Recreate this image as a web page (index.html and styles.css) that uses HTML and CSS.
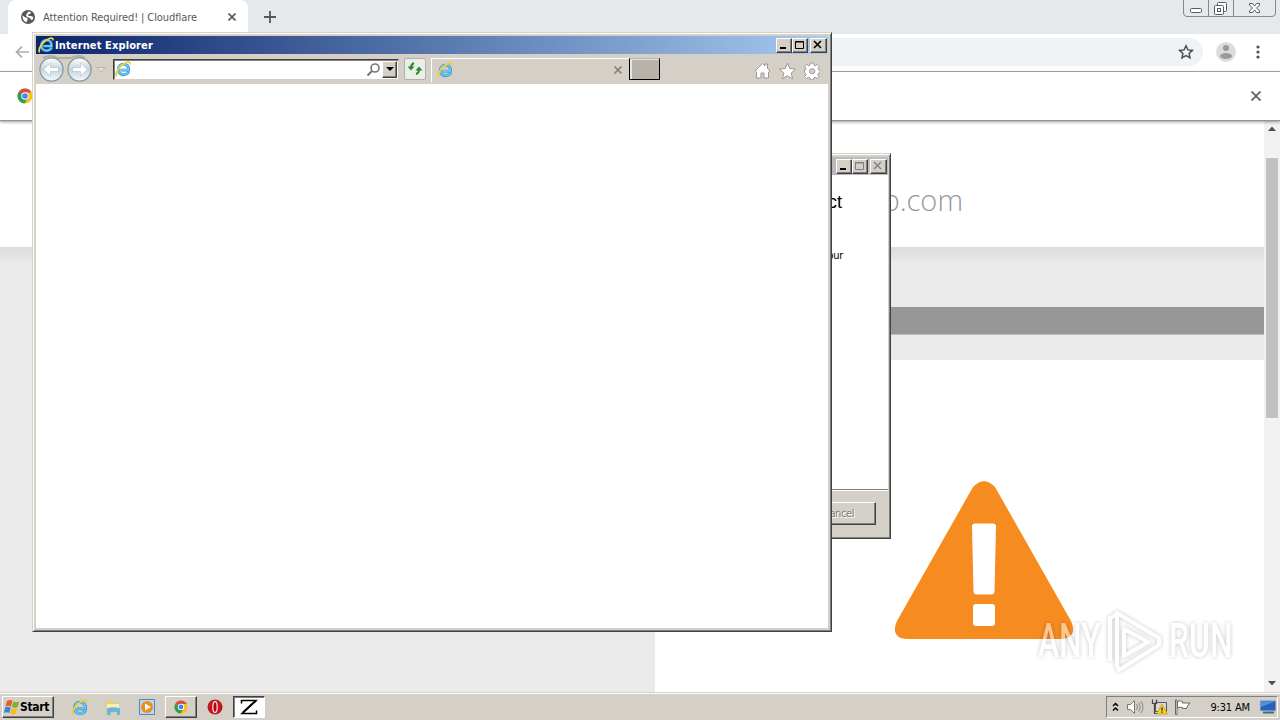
FILE: index.html
```
<!DOCTYPE html>
<html lang="en">
<head>
    <meta charset="UTF-8">
    <title>Desktop</title>
    <link rel="stylesheet" href="styles.css">
</head>
<body>
    <!-- shared icons -->
    <svg class="defs" width="0" height="0">
        <symbol id="ie" viewBox="0 0 16 16">
            <path d="M13.6 10.7c-.9 1.9-2.6 3-5 3-3.2 0-5.3-2.2-5.3-5.2 0-3.100 2.200-5.400 5.300-5.400 3.300 0 5.200 2.300 5 6H5.500" fill="none" stroke="#2f8fd0" stroke-width="2.900"/>
            <path d="M13.500 10.700c-.9 1.900-2.600 2.900-4.900 2.900-3.200 0-5.200-2.200-5.200-5.100 0-3.100 2.200-5.300 5.200-5.300 3.200 0 5.100 2.300 4.900 5.800H5.500" fill="none" stroke="#6cc6f2" stroke-width="1.800"/>
            <path d="M2 15C-.5 14 2.500 7.500 7.500 3.800 11 1.200 15.500-.5 14.800 3.300" fill="none" stroke="#f2cf3a" stroke-width="1.900"/>
        </symbol>
        <symbol id="chrome" viewBox="0 0 16 16">
            <circle cx="8" cy="8" r="7.500" fill="#fbc116"/>
            <path d="M8 8 1.500 4.250A7.500 7.500 0 0 1 14.600 4.500H8z" fill="#dd4b3e"/>
            <path d="M1.500 4.250A7.500 7.500 0 0 0 7.500 15.500L11 9.700 8 8z" fill="#279d58"/>
            <circle cx="8" cy="8" r="3.700" fill="#fff"/>
            <circle cx="8" cy="8" r="2.800" fill="#4285f4"/>
        </symbol>
    </svg>

    <div class="desktop">
        <main class="chrome">
            <div class="tab-strip">
                <div class="tab">
                    <svg width="14" height="14" viewBox="0 0 14 14"><circle cx="7" cy="7" r="7" fill="#55585c"/><path d="M1.500 5.500 4.500 7.500l2 .5v2l-1 2.300C3 11.500 1.200 9 1.500 5.500zM7.500 1.500l2.500.8L9 4 7 4.500 7.500 6h2.500l2.300 1-.5 2.500-1.800.5L9 8 6 7 5 5z" fill="#fff"/></svg>
                    <span class="tab-title">Attention Required! | Cloudflare</span>
                    <svg class="tab-close" width="8" height="8" viewBox="0 0 8 8"><path d="M.5.5l7 7M7.500.5l-7 7" stroke="#55585c" stroke-width="1.600"/></svg>
                </div>
                <svg class="new-tab" width="12" height="12" viewBox="0 0 12 12"><path d="M6 0v12M0 6h12" stroke="#55585c" stroke-width="1.800"/></svg>
                <svg class="win-controls" width="94" height="18" viewBox="0 0 94 18">
                    <path d="M.5 0v13q0 3.500 3.500 3.500h85q3.500 0 3.500-3.500V0M25.500 0v16M50.500 0v16" fill="none" stroke="#84898f"/>
                    <g fill="#fff" stroke="#555b66"><rect x="7.500" y="8.500" width="11" height="4" rx="1"/><rect x="34.500" y="2.500" width="9" height="9" rx="1"/><rect x="31.500" y="5.500" width="9" height="9" rx="1"/><rect x="34.500" y="8.500" width="3" height="3"/><path d="M66.500 3.500h3l2 2.500 2-2.500h3v1.500l-3 3 3 3v1.500h-3l-2-2.500-2 2.500h-3V11l3-3-3-3z"/></g>
                </svg>
            </div>
            <div class="toolbar">
                <svg width="14" height="12" viewBox="0 0 14 12"><path d="M14 6H1.500M7 .7 1.500 6 7 11.300" fill="none" stroke="#aaadb1" stroke-width="1.700"/></svg>
                <div class="omnibox">
                    <svg width="16" height="16" viewBox="0 0 16 16"><path d="M8 1.800l1.900 4.100 4.500.5-3.300 3 .9 4.400L8 11.600l-4 2.200.9-4.400-3.300-3 4.500-.5z" fill="none" stroke="#4c5056" stroke-width="1.500"/></svg>
                </div>
                <svg width="20" height="20" viewBox="0 0 20 20"><circle cx="10" cy="10" r="10" fill="#dcdcdc"/><circle cx="10" cy="6" r="3" fill="#999"/><ellipse cx="10" cy="14" rx="6" ry="3" fill="#999"/></svg>
                <svg class="more" width="4" height="14" viewBox="0 0 4 14"><g fill="#4c5056"><circle cx="2" cy="2" r="1.600"/><circle cx="2" cy="7" r="1.600"/><circle cx="2" cy="12" r="1.600"/></g></svg>
            </div>
            <div class="infobar">
                <svg width="16" height="16"><use href="#chrome"/></svg>
                <svg width="10" height="10" viewBox="0 0 10 10"><path d="M.5.5l9 9M9.500.5l-9 9" stroke="#5f6266" stroke-width="1.800"/></svg>
            </div>
            <div class="viewport">
                <div class="page">
                    <div class="site-head">b.com</div>
                    <div class="captcha"><div class="captcha-bar"></div></div>
                    <div class="columns">
                        <div class="col-left"></div>
                        <div class="col-right">
                            <svg width="178" height="158" viewBox="0 0 178 158">
                                <path d="M78 6Q89-5.500 100 6L176 140Q183 156 167 158H11Q-5 156 2 140z" fill="#f68b1f"/>
                                <path d="M80 42.500h18q3 0 3 3l-1.500 65q0 3-3 3h-15q-3 0-3-3L77 45.500q0-3 3-3z" fill="#fff"/>
                                <rect x="78" y="123" width="22" height="22" rx="3" fill="#fff"/>
                            </svg>
                        </div>
                    </div>
                </div>
                <div class="scrollbar">
                    <svg width="8" height="5" viewBox="0 0 8 5"><path d="M0 5 4 .5 8 5z" fill="#505050"/></svg>
                    <div class="thumb"></div>
                    <svg width="8" height="5" viewBox="0 0 8 5"><path d="M0 0 4 4.500 8 0z" fill="#505050"/></svg>
                </div>
            </div>
        </main>

        <section class="window dialog">
            <div class="title-bar inactive">
                <div class="buttons">
                    <b><svg width="12" height="10"><path d="M2 8h6" stroke="#000" stroke-width="2"/></svg></b>
                    <b><svg width="12" height="10"><path d="M1.500 1.500h8v7h-8zM1 2h9" fill="none" stroke="#808080"/></svg></b>
                    <b class="close"><svg width="12" height="10"><path d="M2 1l7 7M9 1 2 8" stroke="#808080" stroke-width="1.400"/></svg></b>
                </div>
            </div>
            <div class="dialog-body">
                <h1>product</h1>
                <p>your</p>
            </div>
            <div class="dialog-foot"><button>Cancel</button></div>
        </section>

        <section class="window explorer">
            <div class="title-bar">
                <svg width="16" height="16"><use href="#ie"/></svg>
                <span class="caption">Internet Explorer</span>
                <div class="buttons">
                    <b><svg width="12" height="10"><path d="M2 8h6" stroke="#000" stroke-width="2"/></svg></b>
                    <b><svg width="12" height="10"><path d="M1.500 1.500h8v7h-8zM1 2h9" fill="none" stroke="#000"/></svg></b>
                    <b class="close"><svg width="12" height="10"><path d="M2 1l7 7M9 1 2 8" stroke="#000" stroke-width="1.600"/></svg></b>
                </div>
            </div>
            <div class="ie-bar">
                <svg class="nav" width="70" height="28" viewBox="0 0 70 28">
                    <defs><linearGradient id="orb" x2="0" y2="1"><stop offset="0" stop-color="#fff"/><stop offset=".5" stop-color="#c3d3dd"/><stop offset="1" stop-color="#f2fcff"/></linearGradient></defs>
                    <path d="M7 3q8-4 14 0h14q8-4 14 0" fill="none" stroke="#b0ada7" stroke-width="2"/>
                    <g fill="url(#orb)" stroke="#87949c" stroke-width="1.200"><circle cx="15.500" cy="14.500" r="11.600"/><circle cx="43.500" cy="14.500" r="11.600"/></g>
                    <g fill="#fff" stroke="#b3c1ca" stroke-width=".7"><path d="M7.500 14.500l7-6.500v4.500h8v4h-8v4.500z"/><path d="M51.500 14.500l-7-6.500v4.500h-8v4h8v4.500z"/></g>
                    <path d="M61 12.500h8l-4 4.500z" fill="#e8e5df" stroke="#b5b1a9"/>
                </svg>
                <div class="address">
                    <svg width="16" height="16"><use href="#ie"/></svg>
                    <svg class="search" width="13" height="13" viewBox="0 0 13 13"><circle cx="8" cy="5" r="4" fill="none" stroke="#777" stroke-width="1.600"/><path d="M5 8l-4.500 4.500" stroke="#777" stroke-width="2"/></svg>
                    <span class="drop"><svg width="8" height="4"><path d="M0 0h8L4 4z"/></svg></span>
                </div>
                <div class="refresh"><svg width="16" height="16" viewBox="0 0 16 16"><path d="M.5 5.500h7L4 9.500zM8.500 9.500h7L12 5.500z" fill="#2f8a2d"/><path d="M4 6.500q0-3 3-4.500M12 8.500q0 3.500-3 4.500" fill="none" stroke="#2f8a2d" stroke-width="2"/></svg></div>
                <div class="ie-tab">
                    <svg width="16" height="16"><use href="#ie"/></svg>
                    <svg width="8" height="8" viewBox="0 0 8 8"><path d="M.5.5l7 7M7.500.5l-7 7" stroke="#87837d" stroke-width="1.600"/></svg>
                </div>
                <div class="ie-new"></div>
                <svg class="tools" width="66" height="18" viewBox="0 0 66 18">
                    <g fill="#fff" stroke="#9b9791" stroke-linejoin="round">
                        <path d="M1 9l7.500-7.500 2.500 2.500V2h2.500v4.500L16 9l-1.500 1v6H10v-5H7v5H2.500v-6z"/>
                        <path d="M33.500 1l2.300 5.500 5.900.5-4.500 4 1.400 5.800-5.100-3-5.100 3 1.400-5.800-4.500-4 5.900-.5z"/>
                        <path d="M56.600 1h3l.5 2.300 1.200.5 2-1.300 2 2-1.300 2 .5 1.200L66 8v2.800l-1.700.6-.5 1.200 1.300 2-2 2-2-1.300-1.200.5-.5 2h-3l-.5-2-1.200-.5-2 1.300-2-2 1.300-2-.5-1.200-1-.6V8l1-.3.5-1.200-1.300-2 2-2 2 1.300 1.200-.5z"/>
                        <circle cx="58.200" cy="9.300" r="2.600" fill="#d4d0c8"/>
                    </g>
                </svg>
            </div>
            <div class="ie-content"></div>
        </section>

        <footer class="taskbar">
            <div class="start">
                <svg width="16" height="16" viewBox="0 0 16 16"><path d="M3 2q3-2 5.500-.2L7 7.500Q4.500 6 1.500 7.300z" fill="#e65d25"/><path d="M9.300 2.500q3 1.500 6 0L13.700 8q-3 1.500-5.700 0z" fill="#78b52c"/><path d="M1.300 8.300Q4 7 6.700 8.500L5.300 14Q3 12.500 0 13.800z" fill="#3c82d6"/><path d="M7.700 9q3 1.500 5.700 0L12 14.700q-3 1.500-5.700-.2z" fill="#f5bd21"/></svg>
                <span>Start</span>
            </div>
            <div class="task"><svg width="17" height="17"><use href="#ie"/></svg></div>
            <div class="task"><svg width="16" height="16" viewBox="0 0 16 16"><path d="M1 2h5l1 1.500h7V14H1z" fill="#e8cf6c"/><path d="M2 5h12v4H2z" fill="#f9efae"/><path d="M2 9.500q6-2.500 13 0V16h-3v-3H5.500v3H2z" fill="#62b8e3"/></svg></div>
            <div class="task"><svg width="16" height="16" viewBox="0 0 16 16"><path d="M.5.5h15v15H.5z" fill="#b9daf5" stroke="#4589c9"/><circle cx="8" cy="8" r="6" fill="#f38a12"/><path d="M6 4.500 12 8l-6 3.500z" fill="#fff"/></svg></div>
            <div class="task raised"><svg width="14" height="14"><use href="#chrome"/></svg></div>
            <div class="task"><svg width="16" height="16" viewBox="0 0 16 16"><circle cx="8" cy="8" r="7.500" fill="#c4161c"/><ellipse cx="8" cy="8" rx="2.200" ry="5.500" fill="#a80d14" stroke="#f5dada" stroke-width="1.300"/></svg></div>
            <div class="task pressed"><svg width="18" height="16" viewBox="0 0 18 16"><path d="M1.500 4.500V1.500H16L2 14.500h14.500v-3" fill="none" stroke="#000" stroke-width="1.500"/><path d="M16 1.500 3 13.500" stroke="#000" stroke-width="2"/></svg></div>
            <div class="tray">
                <svg width="7" height="10" viewBox="0 0 7 10"><path d="M1 4l2.500-2.500L6 4M1 8.500 3.500 6 6 8.500" fill="none" stroke="#000" stroke-width="1.500"/></svg>
                <svg width="18" height="16" viewBox="0 0 18 16"><path d="M1.500 5.500h3l4-4v13l-4-4h-3z" fill="#fff" stroke="#777"/><path d="M10.500 5q2 3 0 6M12.800 3.500q3 4.500 0 9M15 2q4 6 0 12" fill="none" stroke="#888"/></svg>
                <svg width="17" height="16" viewBox="0 0 17 16"><path d="M4.500 3.500h11v9h-11z" fill="#d8d8d8" stroke="#555"/><path d="M1.500.5v4h4v-4M3.500 4v10.500H7" fill="none" stroke="#444" stroke-width="1.200"/><path d="M11 5l5.500 10h-11z" fill="#f8d31c" stroke="#b69200" stroke-width=".6"/><path d="M11 8.500v3M11 12.500v1.300" stroke="#222" stroke-width="1.300"/></svg>
                <svg width="17" height="16" viewBox="0 0 17 16"><path d="M.5 1v14.500H2V1zM2.500 2.500q3-1.500 5 0V4h7.500l-2.500 3-1 2.500h-4V8.500q-2.500-1-5 .5z" fill="#fff" stroke="#666"/></svg>
                <span class="clock">9:31 AM</span>
                <svg width="16" height="14" viewBox="0 0 16 14"><path d="M.5 1h15v9.500H.5z" fill="#2561ba" stroke="#7292bf"/><path d="M1 1.500h14L1 7z" fill="#4e91dc"/><path d="M3 12.500h11" stroke="#45628a" stroke-width="2"/></svg>
            </div>
        </footer>

        <div class="watermark">
            <span class="any">ANY</span>
            <svg width="60" height="64" viewBox="0 0 60 64"><g fill="none" stroke="#fff" stroke-width="4" stroke-linejoin="round"><path d="M12 58V4L54 29v7L14 61l-2-5M5 52V9l7-4M19 45V20l24 13-24 14z"/></g></svg>
            <span class="run">RUN</span>
        </div>
    </div>
</body>
</html>
```
FILE: styles.css
```
* {
    margin: 0;
    padding: 0;
    box-sizing: border-box;
}

body {
    font-family: 'DejaVu Sans Condensed', 'DejaVu Sans', sans-serif;
    font-size: 11px;
    overflow: hidden;
}

svg {
    display: block;
    flex: none;
}

.defs {
    position: absolute;
}

.desktop {
    position: relative;
    width: 1280px;
    height: 720px;
    display: flex;
    flex-direction: column;
    overflow: hidden;
}

/* Chrome */
.chrome {
    flex: 1;
    display: flex;
    flex-direction: column;
    background: #fff;
    min-height: 0;
}

.tab-strip {
    height: 34px;
    background: #e5e9ec;
    display: flex;
    align-items: flex-start;
    padding-left: 8px;
}

.tab {
    width: 240px;
    height: 34px;
    background: #fff;
    border-radius: 8px 8px 0 0;
    display: flex;
    align-items: center;
    padding: 0 12px 0 13px;
}

.tab-title {
    margin-left: 8px;
    color: #55585c;
    white-space: nowrap;
    letter-spacing: -0.09px;
}

.tab-close {
    margin-left: auto;
}

.new-tab {
    margin: 11px 0 0 16px;
}

.win-controls {
    margin: 0 3px 0 auto;
}

.toolbar {
    height: 38px;
    border-bottom: 1px solid #aaa;
    display: flex;
    align-items: center;
    padding: 0 20px 2px 15px;
}

.omnibox {
    flex: 1;
    height: 28px;
    margin: 0 13px 0 80px;
    padding-right: 9px;
    border-radius: 14px;
    background: #eff3f6;
    display: flex;
    align-items: center;
    justify-content: flex-end;
}

.more {
    margin-left: 20px;
}

.infobar {
    position: relative;
    height: 49px;
    border-bottom: 1px solid #939393;
    box-shadow: 0 1px 3px rgba(0, 0, 0, 0.4);
    display: flex;
    align-items: center;
    justify-content: space-between;
    padding: 0 19px 0 17px;
}

.viewport {
    flex: 1;
    display: flex;
    min-height: 0;
}

.page {
    flex: 1;
    display: flex;
    flex-direction: column;
}

.site-head {
    height: 126px;
    padding: 58px 301px 0 0;
    text-align: right;
    font: 300 29px/42px 'Open Sans', sans-serif;
    color: #999;
}

.captcha {
    height: 113px;
    padding: 60px 0 0 400px;
    background: linear-gradient(#dcdcdc, #e5e5e5 13px, #eaeaea 14px);
}

.captcha-bar {
    height: 28px;
    background: #979797;
    border-bottom: 1px solid #bbb;
}

.columns {
    flex: 1;
    display: grid;
    grid-template-columns: 655px 1fr;
}

.col-left {
    background: #eaeaea;
}

.col-right {
    padding: 121px 0 0 240px;
}

.scrollbar {
    width: 16px;
    background: #f1f1f1;
    display: flex;
    flex-direction: column;
    align-items: center;
    padding: 5px 0 6px;
}

.thumb {
    width: 12px;
    height: 260px;
    margin: 27px 0 auto;
    background: #c1c1c1;
}

/* Classic windows */
.window {
    position: absolute;
    background: #d4d0c8;
    border: 1px solid;
    border-color: #d4d0c8 #404040 #404040 #d4d0c8;
    box-shadow: inset 1px 1px #fff, inset -1px -1px #808080;
    padding: 3px;
    display: flex;
    flex-direction: column;
}

.explorer {
    left: 32px;
    top: 32px;
    width: 800px;
    height: 600px;
}

.title-bar {
    height: 18px;
    flex: none;
    display: flex;
    align-items: center;
    padding: 0 1px 0 2px;
    background: linear-gradient(90deg, #0a246a, #a6caf0);
}

.title-bar.inactive {
    background: linear-gradient(90deg, #808080, #c0c0c0);
}

.caption {
    margin-left: 1px;
    color: #fff;
    font-weight: bold;
    letter-spacing: 0.12px;
}

.buttons {
    margin-left: auto;
    display: flex;
}

.buttons b {
    width: 16px;
    height: 15px;
    background: #d4d0c8;
    border: 1px solid;
    border-color: #fff #404040 #404040 #fff;
    box-shadow: inset -1px -1px #808080;
    padding: 1px;
}

.buttons .close {
    width: 17px;
    margin-left: 2px;
}

.ie-bar {
    height: 30px;
    flex: none;
    display: flex;
    align-items: center;
}

.address {
    width: 286px;
    height: 21px;
    margin-left: 7px;
    background: #fff;
    border: 1px solid;
    border-color: #404040 #d4d0c8 #d4d0c8 #404040;
    box-shadow: inset 1px 1px #808080;
    display: flex;
    align-items: center;
    padding: 1px;
}

.search {
    margin: 0 2px 0 auto;
}

.drop {
    width: 15px;
    height: 17px;
    background: #d4d0c8;
    border: 1px solid;
    border-color: #fff #404040 #404040 #fff;
    box-shadow: inset -1px -1px #808080;
    display: flex;
    align-items: center;
    justify-content: center;
}

.refresh {
    width: 22px;
    height: 22px;
    margin-left: 5px;
    padding: 2px;
    background: #eceeea;
    border: 1px solid #b0b0ad;
    border-radius: 2px;
}

.ie-tab {
    width: 198px;
    height: 24px;
    margin: 2px 0 0 5px;
    border: solid #fff;
    border-width: 1px 0 0 1px;
    display: flex;
    align-items: center;
    justify-content: space-between;
    padding: 0 7px 2px 5px;
}

.ie-new {
    width: 31px;
    height: 22px;
    background: #b7b2aa;
    border: 1px solid;
    border-color: #b7b2aa #000 #000 #000;
    box-shadow: inset 2px 1px #e8e5e0;
}

.tools {
    margin: 4px 8px 0 auto;
}

.ie-content {
    flex: 1;
    background: #fff;
}

.dialog {
    left: 390px;
    top: 153px;
    width: 501px;
    height: 386px;
    padding-right: 2px;
}

.dialog-body {
    flex: 1;
    background: #fff;
    border-bottom: 1px solid #808080;
    text-align: right;
    padding: 14px 45px 0 0;
}

.dialog-body h1 {
    font: 18px/26px 'Liberation Sans', sans-serif;
    padding-right: 1px;
}

.dialog-body p {
    margin-top: 34px;
    line-height: 14px;
    letter-spacing: -0.3px;
}

.dialog-foot {
    height: 45px;
    border-top: 1px solid #fff;
    display: flex;
    align-items: center;
    justify-content: flex-end;
    padding: 1px 12px 0 0;
}

.dialog-foot button {
    width: 75px;
    height: 23px;
    font: 11px 'DejaVu Sans Condensed', sans-serif;
    letter-spacing: -0.4px;
    color: #808080;
    text-shadow: 1px 1px #fff;
    background: #d4d0c8;
    border: 1px solid;
    border-color: #fff #404040 #404040 #fff;
    box-shadow: inset -1px -1px #808080;
}

/* Taskbar */
.taskbar {
    height: 28px;
    background: #d4d0c8;
    box-shadow: inset 0 1px #d4d0c8, inset 0 2px #fff;
    display: flex;
    align-items: center;
    padding: 3px 2px 1px;
}

.start,
.raised {
    border: 1px solid;
    border-color: #fff #404040 #404040 #fff;
    box-shadow: inset -1px -1px #808080;
}

.start {
    width: 52px;
    height: 22px;
    margin-right: 9px;
    display: flex;
    align-items: center;
    padding-left: 1px;
    font-size: 12px;
    font-weight: bold;
    letter-spacing: -0.35px;
}

.task {
    width: 32px;
    height: 22px;
    margin-right: 2px;
    display: flex;
    align-items: center;
    justify-content: center;
}

.pressed {
    background: #fff;
    border: 1px solid;
    border-color: #404040 #fff #fff #404040;
    box-shadow: inset 1px 1px #808080;
}

.tray {
    width: 172px;
    height: 22px;
    margin-left: auto;
    border: 1px solid;
    border-color: #808080 #fff #fff #808080;
    display: flex;
    align-items: center;
    gap: 7px;
    padding: 0 1px 0 5px;
}

.clock {
    margin: 0 3px 0 auto;
    letter-spacing: -0.15px;
    white-space: nowrap;
}

/* Watermark */
.watermark {
    position: absolute;
    left: 1038px;
    top: 608px;
    width: 194px;
    height: 66px;
    display: flex;
    align-items: center;
    justify-content: space-between;
    opacity: 0.5;
    color: #fff;
    font: 500 49px/68px Roboto, sans-serif;
    filter: drop-shadow(0 0 2px rgba(0, 0, 0, 0.45));
}

.watermark span {
    width: 63px;
    transform: scaleX(0.65);
    transform-origin: left;
}
```
